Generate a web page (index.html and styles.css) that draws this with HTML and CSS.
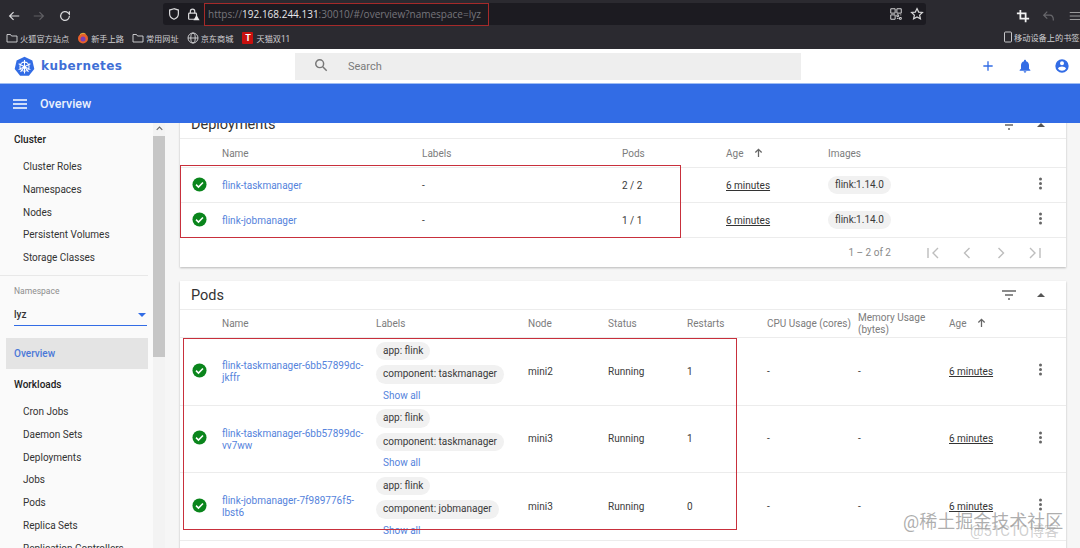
FILE: index.html
```html
<!DOCTYPE html>
<html lang="en">
<head>
    <meta charset="UTF-8">
    <meta name="viewport" content="width=device-width, initial-scale=1.0">
    <title>Overview - Kubernetes Dashboard</title>
    <link rel="stylesheet" href="styles.css">
</head>
<body>
    <!-- browser chrome -->
    <div class="toolbar">
        <svg class="tool-icon back" viewBox="0 0 16 16"><path d="M14 8H3M7.5 3.5 3 8l4.500 4.500"/></svg>
        <svg class="tool-icon forward" viewBox="0 0 16 16"><path d="M2 8h11M8.500 3.500 13 8l-4.500 4.500"/></svg>
        <svg class="tool-icon reload" viewBox="0 0 16 16"><path d="M13 8a5 5 0 1 1-1.500-3.500L13 6V2.500"/></svg>
        <div class="urlbar">
            <svg class="tool-icon shield" viewBox="0 0 16 16"><path d="M8 2 3 3.500V8c0 3 2.500 5 5 6 2.500-1 5-3 5-6V3.500z"/></svg>
            <svg class="tool-icon lock" viewBox="0 0 16 16"><rect x="3" y="7" width="9" height="7" rx="1"/><path d="M5 7V5a2.500 2.500 0 0 1 5 0v2"/><path class="lock-warn" d="m12 9 3.500 6h-7z"/></svg>
            <span class="url">https://<b>192.168.244.131</b>:30010/#/overview?namespace=lyz</span>
            <svg class="tool-icon qr" viewBox="0 0 16 16"><path d="M2 2h5v5H2zM9 2h5v5H9zM2 9h5v5H2zM9 9h2v2H9zM12 12h2v2h-2zM9 13h2M13 9h1"/></svg>
            <svg class="tool-icon star" viewBox="0 0 16 16"><path d="m8 1.800 1.900 4 4.300.5-3.200 3 .9 4.300L8 11.500l-3.900 2.100.9-4.300-3.200-3 4.300-.5z"/></svg>
        </div>
        <svg class="tool-icon crop" viewBox="0 0 16 16"><path d="M5 1v10h10M1 5h10v10"/></svg>
        <svg class="tool-icon undo" viewBox="0 0 16 16"><path d="M6 3 2 7l4 4M2 7h7c3 0 4 2 4 6"/></svg>
        <svg class="tool-icon menu" viewBox="0 0 16 16"><path d="M2 4h12M2 8h12M2 12h12"/></svg>
    </div>
    <div class="bookmarks">
        <svg class="mark-icon" viewBox="0 0 12 12"><path d="M1 2.500h3.500l1 1.500H11v6H1z"/></svg>
        <span class="mark">火狐官方站点</span>
        <svg class="mark-icon fox" viewBox="0 0 12 12"><circle cx="6" cy="6.500" r="5" fill="#e8602c" stroke="none"/><circle cx="6" cy="7" r="2.500" fill="#7b3fb5" stroke="none"/><path d="M3 2.500C5 1 7 1 8.500 2" stroke="#f9c33c"/></svg>
        <span class="mark">新手上路</span>
        <svg class="mark-icon" viewBox="0 0 12 12"><path d="M1 2.500h3.500l1 1.500H11v6H1z"/></svg>
        <span class="mark">常用网址</span>
        <svg class="mark-icon" viewBox="0 0 12 12"><circle cx="6" cy="6" r="5"/><ellipse cx="6" cy="6" rx="2.200" ry="5"/><path d="M1 6h10"/></svg>
        <span class="mark">京东商城</span>
        <span class="tmall">T</span>
        <span class="mark">天猫双11</span>
        <span class="mobile">
            <svg class="mark-icon" viewBox="0 0 12 12"><rect x="2.500" y="1" width="7" height="10" rx="1"/></svg>
            <span class="mark">移动设备上的书签</span>
        </span>
    </div>

    <!-- dashboard top -->
    <header class="topbar">
        <svg class="k8s-logo" viewBox="0 0 24 24">
            <path class="k8s-hept" d="M12 .8 21 5.100l2.200 9.700-6.200 7.800H7l-6.200-7.800L3 5.100z"/>
            <circle class="k8s-wheel" cx="12" cy="12.200" r="5.200"/>
            <path class="k8s-wheel" d="M12 4.500v15.400M5.300 8.800l13.400 6.800M18.700 8.800 5.300 15.600M7.500 18.200 12 12.200l4.500 6"/>
        </svg>
        <span class="brand">kubernetes</span>
        <div class="search">
            <svg class="search-icon" viewBox="0 0 16 16"><circle cx="6.500" cy="6.500" r="4.500"/><path d="m10 10 4.500 4.500"/></svg>
            <span>Search</span>
        </div>
        <div class="top-actions">
            <svg viewBox="0 0 24 24"><path d="M19 13h-6v6h-2v-6H5v-2h6V5h2v6h6z"/></svg>
            <svg viewBox="0 0 24 24"><path d="M12 22c1.100 0 2-.9 2-2h-4c0 1.100.9 2 2 2zm6-6v-5c0-3.100-1.600-5.600-4.500-6.300V4c0-.8-.7-1.500-1.500-1.500s-1.500.7-1.500 1.500v.7C7.600 5.400 6 7.900 6 11v5l-2 2v1h16v-1z"/></svg>
            <svg viewBox="0 0 24 24"><path d="M12 2a10 10 0 1 0 0 20 10 10 0 0 0 0-20zm0 3a3 3 0 1 1 0 6 3 3 0 0 1 0-6zm0 14.200a7.200 7.200 0 0 1-6-3.200c0-2 4-3.100 6-3.100s6 1.100 6 3.100a7.200 7.200 0 0 1-6 3.200z"/></svg>
        </div>
    </header>
    <div class="titlebar">
        <svg class="burger" viewBox="0 0 14 10"><path d="M0 1h14M0 5h14M0 9h14"/></svg>
        <span>Overview</span>
    </div>

    <div class="layout">
        <aside class="sidebar">
            <div class="nav">
                <h4 class="nav-title first">Cluster</h4>
                <a class="nav-item">Cluster Roles</a>
                <a class="nav-item">Namespaces</a>
                <a class="nav-item">Nodes</a>
                <a class="nav-item">Persistent Volumes</a>
                <a class="nav-item">Storage Classes</a>
                <div class="nav-line"></div>
                <div class="ns-label">Namespace</div>
                <div class="ns-select"><span>lyz</span><i class="caret"></i></div>
                <a class="nav-active">Overview</a>
                <h4 class="nav-title">Workloads</h4>
                <a class="nav-item">Cron Jobs</a>
                <a class="nav-item">Daemon Sets</a>
                <a class="nav-item">Deployments</a>
                <a class="nav-item">Jobs</a>
                <a class="nav-item">Pods</a>
                <a class="nav-item">Replica Sets</a>
                <a class="nav-item">Replication Controllers</a>
            </div>
            <div class="side-scroll">
                <svg class="side-arrow" viewBox="0 0 10 6"><path d="M1 5l4-4 4 4"/></svg>
                <div class="side-thumb"></div>
            </div>
        </aside>

        <main class="content">
            <section class="card deployments">
                <div class="card-head">
                    <h2>Deployments</h2>
                    <svg class="filter" viewBox="0 0 14 10"><path d="M0 1h14M3 5h8M6 9h2"/></svg>
                    <i class="collapse"></i>
                </div>
                <div class="row head">
                    <div></div><div>Name</div><div>Labels</div><div>Pods</div>
                    <div>Age <svg class="sort" viewBox="0 0 10 10"><path d="M5 10V2M1.500 5 5 1.500 8.500 5"/></svg></div>
                    <div>Images</div><div></div>
                </div>
                <div class="row">
                    <div><svg class="ok" viewBox="0 0 16 16"><circle cx="8" cy="8" r="7.500"/><path d="m4.300 8.200 2.600 2.500 4.800-4.900"/></svg></div>
                    <div><a class="link">flink-taskmanager</a></div>
                    <div>-</div>
                    <div>2 / 2</div>
                    <div><span class="age">6 minutes</span></div>
                    <div><span class="chip">flink:1.14.0</span></div>
                    <div><i class="dots"></i></div>
                </div>
                <div class="row">
                    <div><svg class="ok" viewBox="0 0 16 16"><circle cx="8" cy="8" r="7.500"/><path d="m4.300 8.200 2.600 2.500 4.800-4.900"/></svg></div>
                    <div><a class="link">flink-jobmanager</a></div>
                    <div>-</div>
                    <div>1 / 1</div>
                    <div><span class="age">6 minutes</span></div>
                    <div><span class="chip">flink:1.14.0</span></div>
                    <div><i class="dots"></i></div>
                </div>
                <div class="pager">
                    <span class="range">1 – 2 of 2</span>
                    <svg viewBox="0 0 14 14"><path d="M2 2v10M12 2 7 7l5 5"/></svg>
                    <svg viewBox="0 0 14 14"><path d="M9.500 2l-5 5 5 5"/></svg>
                    <svg viewBox="0 0 14 14"><path d="m4.500 2 5 5-5 5"/></svg>
                    <svg viewBox="0 0 14 14"><path d="M12 2v10M2 2l5 5-5 5"/></svg>
                </div>
            </section>

            <section class="card pods">
                <div class="card-head">
                    <h2>Pods</h2>
                    <svg class="filter" viewBox="0 0 14 10"><path d="M0 1h14M3 5h8M6 9h2"/></svg>
                    <i class="collapse"></i>
                </div>
                <div class="row head">
                    <div></div><div>Name</div><div>Labels</div><div>Node</div><div>Status</div><div>Restarts</div>
                    <div>CPU Usage (cores)</div><div>Memory Usage (bytes)</div>
                    <div>Age <svg class="sort" viewBox="0 0 10 10"><path d="M5 10V2M1.500 5 5 1.500 8.500 5"/></svg></div>
                    <div></div>
                </div>
                <div class="row">
                    <div><svg class="ok" viewBox="0 0 16 16"><circle cx="8" cy="8" r="7.500"/><path d="m4.300 8.200 2.600 2.500 4.800-4.900"/></svg></div>
                    <div class="pod-name"><a class="link">flink-taskmanager-6bb57899dc-jkffr</a></div>
                    <div class="labels"><span class="chip">app: flink</span><span class="chip">component: taskmanager</span><a class="link show">Show all</a></div>
                    <div>mini2</div><div>Running</div><div>1</div><div>-</div><div>-</div>
                    <div><span class="age">6 minutes</span></div>
                    <div><i class="dots"></i></div>
                </div>
                <div class="row">
                    <div><svg class="ok" viewBox="0 0 16 16"><circle cx="8" cy="8" r="7.500"/><path d="m4.300 8.200 2.600 2.500 4.800-4.900"/></svg></div>
                    <div class="pod-name"><a class="link">flink-taskmanager-6bb57899dc-vv7ww</a></div>
                    <div class="labels"><span class="chip">app: flink</span><span class="chip">component: taskmanager</span><a class="link show">Show all</a></div>
                    <div>mini3</div><div>Running</div><div>1</div><div>-</div><div>-</div>
                    <div><span class="age">6 minutes</span></div>
                    <div><i class="dots"></i></div>
                </div>
                <div class="row">
                    <div><svg class="ok" viewBox="0 0 16 16"><circle cx="8" cy="8" r="7.500"/><path d="m4.300 8.200 2.600 2.500 4.800-4.900"/></svg></div>
                    <div class="pod-name"><a class="link">flink-jobmanager-7f989776f5-lbst6</a></div>
                    <div class="labels"><span class="chip">app: flink</span><span class="chip">component: jobmanager</span><a class="link show">Show all</a></div>
                    <div>mini3</div><div>Running</div><div>0</div><div>-</div><div>-</div>
                    <div><span class="age">6 minutes</span></div>
                    <div><i class="dots"></i></div>
                </div>
                <div class="row-end"></div>
            </section>
        </main>
    </div>

    <!-- annotations drawn over the screenshot -->
    <div class="mark-box box-url"></div>
    <div class="mark-box box-deploy"></div>
    <div class="mark-box box-pods"></div>
    <div class="watermark wm-juejin">@稀土掘金技术社区</div>
    <div class="watermark wm-cto">@51CTO博客</div>
</body>
</html>
```

FILE: styles.css
```css
* {
    box-sizing: border-box;
}
html, body {
    height: 548px;
    overflow: hidden;
}
body {
    margin: 0;
    position: relative;
    font-family: Roboto, "Noto Sans CJK SC", sans-serif;
    font-size: 10px;
    color: #3a3a3a;
    background: #f6f6f6;
}

/* browser chrome */
.toolbar {
    height: 30px;
    display: flex;
    align-items: center;
    background: #2b2a30;
    padding-top: 1px;
}
.tool-icon {
    width: 14px;
    height: 14px;
    fill: none;
    stroke: #d8d8da;
    stroke-width: 1.4;
    flex: none;
}
.back { margin-left: 7px; }
.forward { margin-left: 11px; opacity: 0.3; }
.reload { margin-left: 12px; }
.urlbar {
    width: 763px;
    height: 22px;
    flex: none;
    margin-left: 91px;
    margin-top: -4px;
    display: flex;
    align-items: center;
    background: #1c1b21;
    border-radius: 3px;
    padding-left: 3px;
}
.shield { margin-left: 1px; }
.lock { margin-left: 5px; }
.lock-warn {
    fill: #e8e8ea;
    stroke: none;
}
.url {
    margin-left: 8px;
    font-family: "Open Sans", sans-serif;
    font-size: 10px;
    color: #77767c;
    white-space: nowrap;
    flex: 1;
}
.url b {
    color: #e8e8ea;
    font-weight: 400;
}
.qr { margin-right: 7px; stroke-width: 1.1; }
.star { margin-right: 2px; }
.crop { margin-left: 90px; stroke: #f2f2f2; stroke-width: 2; }
.undo { margin-left: 12px; opacity: 0.35; }
.menu { margin-left: 12px; stroke: #9a9a9c; }
.bookmarks {
    height: 19px;
    display: flex;
    align-items: center;
    background: #2b2a30;
    padding: 0 0 4px 6px;
    position: relative;
}
.mark-icon {
    width: 12px;
    height: 12px;
    fill: none;
    stroke: #d8d8da;
    stroke-width: 0.9;
    flex: none;
}
.mark {
    margin-left: 2px;
    margin-right: 8px;
    font-size: 8.200px;
    color: #cfcfd2;
    white-space: nowrap;
}
.tmall {
    width: 11px;
    height: 12px;
    margin-left: 1px;
    margin-right: 1px;
    background: #c8100f;
    color: #fff;
    font-size: 9px;
    font-weight: 700;
    text-align: center;
    line-height: 12px;
    border-radius: 1px;
}
.mobile {
    position: absolute;
    left: 1002px;
    top: 1px;
    display: flex;
    align-items: center;
    white-space: nowrap;
}
.mobile .mark {
    margin: 0;
}

/* dashboard header */
.topbar {
    height: 34px;
    display: flex;
    align-items: center;
    background: #fff;
    padding-left: 14px;
}
.k8s-logo {
    width: 21px;
    height: 21px;
    flex: none;
}
.k8s-hept {
    fill: #326ce5;
}
.k8s-wheel {
    fill: none;
    stroke: #fff;
    stroke-width: 1.200;
}
.brand {
    margin-left: 6px;
    width: 254px;
    font-family: "DejaVu Sans", sans-serif;
    font-weight: 700;
    font-size: 12px;
    letter-spacing: 0.45px;
    color: #3f6fd6;
}
.search {
    width: 506px;
    height: 27px;
    display: flex;
    align-items: center;
    background: #eeeeee;
    padding-left: 19px;
    font-size: 11px;
    color: #7b7b7b;
}
.search-icon {
    width: 14px;
    height: 14px;
    margin-right: 20px;
    margin-top: -3px;
    fill: none;
    stroke: #777;
    stroke-width: 1.700;
}
.top-actions {
    margin-left: 179px;
    display: flex;
    gap: 21px;
}
.top-actions svg {
    width: 16px;
    height: 16px;
    fill: #326ce5;
}
.titlebar {
    height: 40px;
    display: flex;
    align-items: center;
    background: #326ce5;
    border-top: 1px solid #9fbdf3;
    color: #eaf0fd;
    font-size: 12.500px;
    font-weight: 500;
    padding-left: 13px;
}
.burger {
    width: 14px;
    height: 10px;
    margin-right: 13px;
    fill: none;
    stroke: #fff;
    stroke-width: 1.500;
}

/* sidebar */
.layout {
    display: flex;
    height: 425px;
    overflow: hidden;
}
.sidebar {
    width: 165px;
    flex: none;
    display: flex;
    background: #fafafa;
}
.nav {
    width: 153px;
    padding: 5px 5px 0 6px;
}
.nav-title {
    margin: 0;
    height: 23px;
    line-height: 23px;
    padding-left: 8px;
    font-size: 10px;
    font-weight: 500;
    color: #222;
}
.nav-title.first {
    margin-bottom: 5px;
}
.nav-title:not(.first) {
    margin-top: 4px;
    margin-bottom: 5px;
}
.nav-item {
    display: block;
    height: 22.800px;
    line-height: 22.800px;
    padding-left: 17px;
    color: #333;
    white-space: nowrap;
}
.nav-line {
    height: 1px;
    margin: 5px 0 0 -6px;
    background: #e8e8e8;
}
.ns-label {
    margin: 10px 0 0 8px;
    font-size: 8.500px;
    color: #8d8d8d;
}
.ns-select {
    margin: 11px 0 0 8px;
    height: 19px;
    width: 133px;
    display: flex;
    justify-content: space-between;
    padding: 2px 1px 0 0;
    border-bottom: 1.500px solid #326ce5;
    font-weight: 500;
    color: #333;
}
.caret {
    margin-top: 4px;
    width: 0;
    height: 0;
    border-left: 4px solid transparent;
    border-right: 4px solid transparent;
    border-top: 4px solid #326ce5;
}
.nav-active {
    display: block;
    height: 31px;
    line-height: 31px;
    margin-top: 12px;
    padding-left: 8px;
    background: #e4e4e4;
    color: #4a78d8;
    font-weight: 500;
}
.side-scroll {
    width: 12px;
    background: #f3f3f3;
    position: relative;
}
.side-arrow {
    display: block;
    margin: 3px auto 5px;
    width: 7px;
    height: 5px;
    fill: none;
    stroke: #666;
    stroke-width: 1.500;
}
.side-thumb {
    height: 221px;
    background: #c6c6c6;
}

/* main cards */
.content {
    flex: 1;
    padding: 0 14px 0 15px;
    min-width: 0;
}
.card {
    background: #fff;
    box-shadow: 0 1px 2px rgba(0, 0, 0, 0.25);
}
.deployments {
    margin-top: -12px;
    margin-bottom: 14px;
}
.card-head {
    height: 28px;
    display: flex;
    align-items: center;
    padding: 0 21px 0 11px;
    border-bottom: 1px solid #ececec;
}
.pods .card-head {
    height: 29px;
}
.card-head h2 {
    margin: 0;
    flex: 1;
    font-size: 14.500px;
    font-weight: 400;
    color: #333;
}
.filter {
    width: 14px;
    height: 10px;
    margin-right: 21px;
    fill: none;
    stroke: #666;
    stroke-width: 1.300;
}
.collapse {
    width: 0;
    height: 0;
    border-left: 4px solid transparent;
    border-right: 4px solid transparent;
    border-bottom: 4px solid #555;
}
.row {
    display: grid;
    align-items: center;
    border-bottom: 1px solid #ececec;
}
.deployments .row {
    grid-template-columns: 42px 200px 200px 104px 102px 1fr 38px;
    height: 35px;
}
.pods .row {
    grid-template-columns: 42px 154px 152px 80px 79px 80px 91px 91px 91px 1fr;
    height: 67.600px;
}
.row.head {
    color: #7c7c7c;
}
.deployments .row.head {
    height: 29px;
}
.pods .row.head {
    height: 28px;
    line-height: 12px;
}
.pods .row.head div:nth-child(8) {
    padding-right: 14px;
}
.ok {
    display: block;
    width: 15px;
    height: 15px;
    margin: -2px 0 0 12px;
}
.ok circle {
    fill: #0a851c;
}
.ok path {
    fill: none;
    stroke: #fff;
    stroke-width: 1.700;
}
.link {
    color: #5583dc;
}
.pod-name {
    margin-top: 2px;
}
.pods .row .link {
    display: block;
    padding-right: 10px;
    line-height: 12px;
}
.age {
    text-decoration: underline;
    color: #333;
}
.chip {
    display: inline-block;
    height: 18.500px;
    line-height: 18.500px;
    padding: 0 7px;
    border-radius: 10px;
    background: #f1f1f1;
    color: #3a3a3a;
    white-space: nowrap;
}
.labels {
    display: flex;
    flex-direction: column;
    align-items: flex-start;
    gap: 5px;
    margin-top: 1px;
}
.pods .row .show {
    padding-left: 7px;
    margin-top: 1px;
}
.sort {
    width: 9px;
    height: 9px;
    margin-left: 8px;
    fill: none;
    stroke: #666;
    stroke-width: 1.400;
}
.dots {
    display: block;
    width: 3px;
    height: 3px;
    margin: -3px auto 0;
    border-radius: 50%;
    background: #666;
    box-shadow: 0 4.500px 0 #666, 0 -4.500px 0 #666;
}
.deployments .dots {
    margin-left: 11px;
}
.pods .dots {
    margin-left: -1px;
}
.pager {
    height: 29px;
    display: flex;
    align-items: center;
    justify-content: flex-end;
    padding-right: 24px;
    color: #8a8a8a;
}
.pager svg {
    width: 14px;
    height: 14px;
    margin-left: 20px;
    fill: none;
    stroke: #bdbdbd;
    stroke-width: 1.400;
}
.pager .range {
    margin-right: 15px;
}
.row-end {
    height: 40px;
}

/* annotations */
.mark-box {
    position: absolute;
    border: 1.500px solid #c8303c;
}
.box-url {
    left: 204px;
    top: 3px;
    width: 285px;
    height: 23px;
    border-color: #a52a2a;
}
.box-deploy {
    left: 180px;
    top: 165px;
    width: 501px;
    height: 73px;
}
.box-pods {
    left: 183px;
    top: 338px;
    width: 554px;
    height: 192px;
}
.watermark {
    position: absolute;
    white-space: nowrap;
}
.wm-juejin {
    left: 903px;
    top: 507px;
    font-size: 18px;
    color: rgba(120, 120, 120, 0.6);
}
.wm-cto {
    left: 970px;
    top: 519px;
    font-size: 15px;
    color: rgba(150, 150, 150, 0.45);
}
```
